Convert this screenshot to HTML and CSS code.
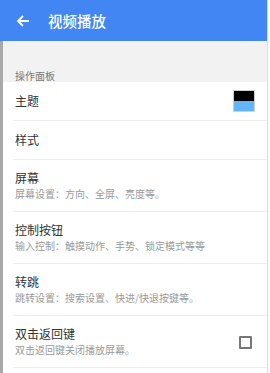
FILE: index.html
```html
<!DOCTYPE html>
<html lang="zh">
<head>
<meta charset="utf-8">
<link rel="stylesheet" href="styles.css">
</head>
<body>
<div class="app">
  <header class="bar">
    <svg class="back" width="14" height="14" viewBox="0 0 14 14"><path d="M13 7H2.2M7 2L2 7l5 5" fill="none" stroke="#fff" stroke-width="1.8"/></svg>
    <span class="title">视频播放</span>
  </header>
  <main class="content">
    <div class="category">操作面板</div>
    <div class="row">
      <div class="text"><div class="t">主题</div></div>
      <div class="swatch"><span class="sw-top"></span><span class="sw-bot"></span></div>
    </div>
    <div class="row">
      <div class="text"><div class="t">样式</div></div>
    </div>
    <div class="row two">
      <div class="text"><div class="t">屏幕</div><div class="s">屏幕设置：方向、全屏、亮度等。</div></div>
    </div>
    <div class="row two">
      <div class="text"><div class="t">控制按钮</div><div class="s">输入控制：触摸动作、手势、锁定模式等等</div></div>
    </div>
    <div class="row two">
      <div class="text"><div class="t">转跳</div><div class="s">跳转设置：搜索设置、快进/快退按键等。</div></div>
    </div>
    <div class="row two">
      <div class="text"><div class="t">双击返回键</div><div class="s">双击返回键关闭播放屏幕。</div></div>
      <span class="check"></span>
    </div>
  </main>
</div>
</body>
</html>
```
FILE: styles.css
```css
html, body { margin: 0; padding: 0; background: #fff; }
body { font-family: "Noto Sans CJK SC", "Noto Sans", sans-serif; }
.app { width: 267px; border-right: 1px solid #dcdcdc; min-height: 373px; background: #fff; }
.bar { height: 41px; background: #4286f4; display: flex; align-items: center; color: #fff; }
.back { margin-left: 16px; margin-right: 18px; }
.title { font-size: 14.5px; font-weight: 500; }
.content { border-left: 3px solid #a8a8a8; min-height: 332px; }
.category { background: #f2f2f2; padding: 29px 12px 0; height: 12px; line-height: 12px; font-size: 10px; color: #777; }
.row { margin-left: 10px; border-bottom: 1px solid #eee; display: flex; align-items: center; height: 38px; padding: 0 13px 0 2px; }
.row.two { height: 51px; }
.text { flex: 1; }
.t { font-size: 12px; line-height: 16px; color: #333; }
.s { font-size: 10px; line-height: 15px; color: #9a9a9a; }
.swatch { width: 20px; height: 20px; border: 1px solid #d0d0d0; display: flex; flex-direction: column; margin-right: -1px; }
.sw-top { flex: 1; background: #000; }
.sw-bot { flex: 1; background: #64b5f6; }
.check { width: 9px; height: 9px; border: 2px solid #777; border-radius: 1px; margin-right: 2px; margin-top: 2px; }
```
